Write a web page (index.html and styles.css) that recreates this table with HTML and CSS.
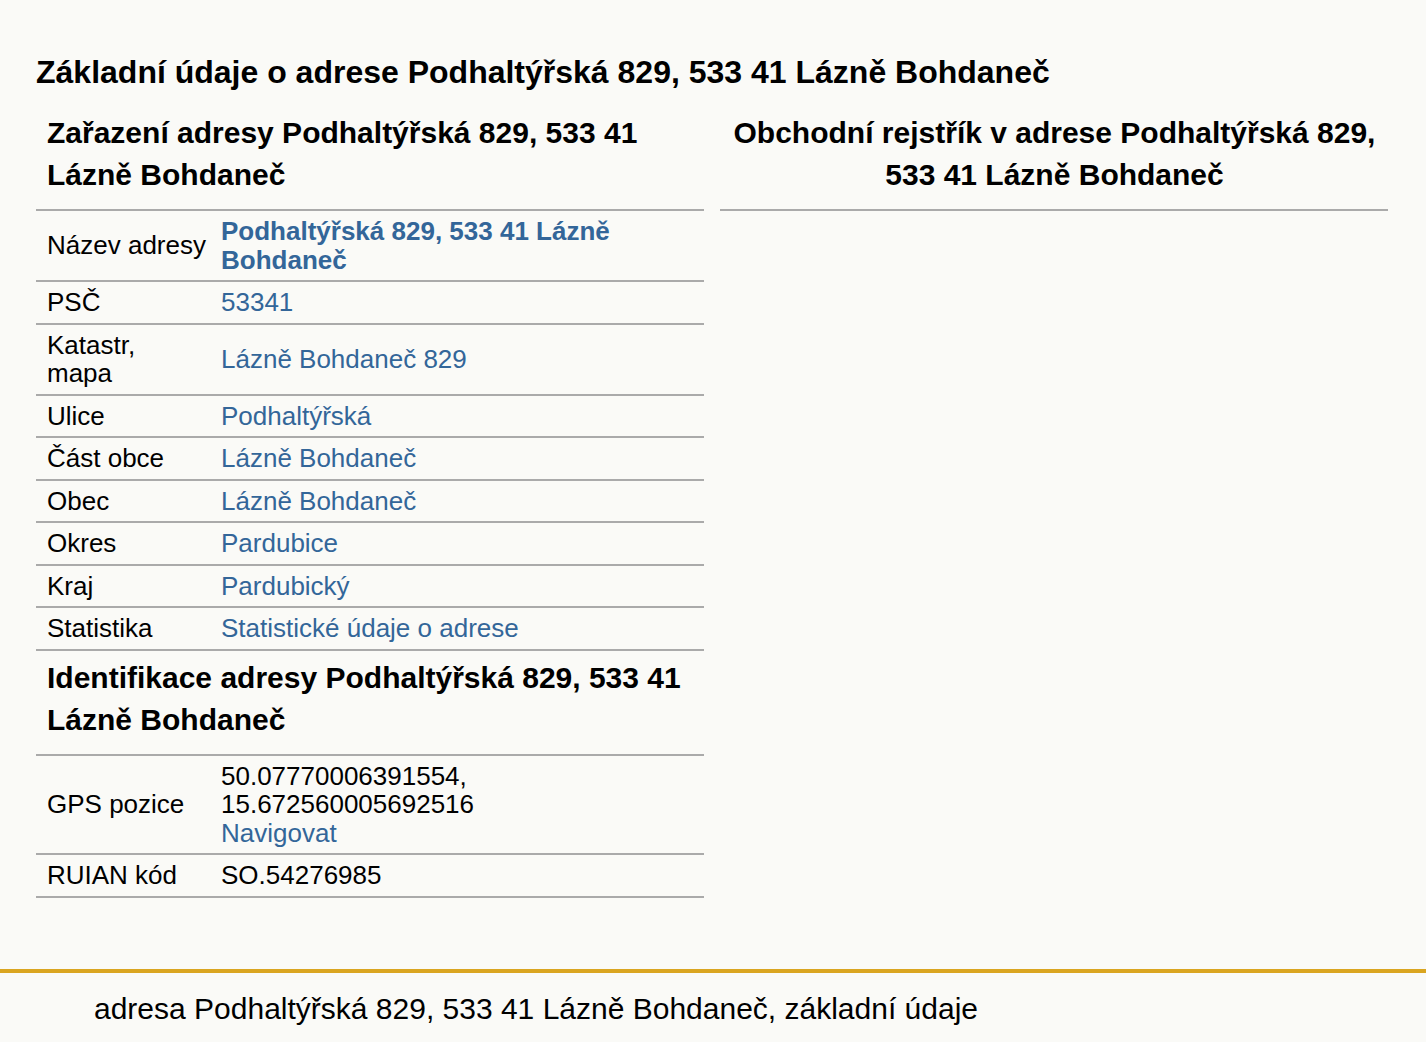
FILE: index.html
```html
<!DOCTYPE html>
<html lang="cs">

<head>
    <meta charset="UTF-8">
    <meta name="viewport" content="width=device-width, initial-scale=1.0">
    <title>Podhaltýřská 829, 533 41 Lázně Bohdaneč</title>
    <link rel="stylesheet" href="styles.css">
</head>

<body>

    <div class="page">

        <h1 class="title">Základní údaje o adrese Podhaltýřská 829, 533 41 Lázně Bohdaneč</h1>

        <div class="columns">

            <div class="col">
                <table class="info">
                    <colgroup>
                        <col class="labelcol">
                        <col>
                    </colgroup>
                    <tr>
                        <th class="sectionhead" colspan="2">Zařazení adresy Podhaltýřská 829, 533 41 Lázně Bohdaneč</th>
                    </tr>
                    <tr>
                        <td class="label">Název adresy</td>
                        <td class="value"><a href="#" class="strong">Podhaltýřská 829, 533 41 Lázně Bohdaneč</a></td>
                    </tr>
                    <tr>
                        <td class="label">PSČ</td>
                        <td class="value"><a href="#">53341</a></td>
                    </tr>
                    <tr>
                        <td class="label">Katastr, mapa</td>
                        <td class="value"><a href="#">Lázně Bohdaneč 829</a></td>
                    </tr>
                    <tr>
                        <td class="label">Ulice</td>
                        <td class="value"><a href="#">Podhaltýřská</a></td>
                    </tr>
                    <tr>
                        <td class="label">Část obce</td>
                        <td class="value"><a href="#">Lázně Bohdaneč</a></td>
                    </tr>
                    <tr>
                        <td class="label">Obec</td>
                        <td class="value"><a href="#">Lázně Bohdaneč</a></td>
                    </tr>
                    <tr>
                        <td class="label">Okres</td>
                        <td class="value"><a href="#">Pardubice</a></td>
                    </tr>
                    <tr>
                        <td class="label">Kraj</td>
                        <td class="value"><a href="#">Pardubický</a></td>
                    </tr>
                    <tr>
                        <td class="label">Statistika</td>
                        <td class="value"><a href="#">Statistické údaje o adrese</a></td>
                    </tr>
                    <tr>
                        <th class="sectionhead" colspan="2">Identifikace adresy Podhaltýřská 829, 533 41 Lázně Bohdaneč</th>
                    </tr>
                    <tr>
                        <td class="label">GPS pozice</td>
                        <td class="value">50.07770006391554,<br>15.672560005692516<br><a href="#">Navigovat</a></td>
                    </tr>
                    <tr>
                        <td class="label">RUIAN kód</td>
                        <td class="value">SO.54276985</td>
                    </tr>
                </table>
            </div>

            <div class="col">
                <h2 class="sectionhead centered">Obchodní rejstřík v adrese Podhaltýřská 829, 533 41 Lázně Bohdaneč</h2>
            </div>

        </div>
    </div>

    <div class="footer">
        adresa Podhaltýřská 829, 533 41 Lázně Bohdaneč, základní údaje
    </div>

</body>

</html>
```

FILE: styles.css
```css
body {
    margin: 0;
    padding: 0;
    background: #fafaf7;
    color: #000;
    font-family: "Liberation Sans", Arial, sans-serif;
}

* {
    box-sizing: border-box;
}

a {
    color: #336699;
    text-decoration: none;
}

.page {
    padding: 0 38px 0 36px;
}

.title {
    margin: 54px 0 0 0;
    font-size: 32px;
    font-weight: 700;
    line-height: 37px;
}

.columns {
    display: grid;
    grid-template-columns: 1fr 1fr;
    gap: 16px;
    margin-top: 15px;
}

.info {
    width: 100%;
    border-collapse: collapse;
    table-layout: fixed;
}

.labelcol {
    width: 175px;
}

.sectionhead {
    margin: 0;
    padding: 6px 10px 13px 11px;
    font-size: 30px;
    font-weight: 700;
    line-height: 42px;
    text-align: left;
    border-bottom: 2px solid #aaa;
}

.centered {
    text-align: center;
}

.info td {
    font-size: 26px;
    line-height: 28.5px;
    padding: 6px 10px;
    vertical-align: middle;
    border-bottom: 2px solid #aaa;
}

.info td.label {
    padding-left: 11px;
    padding-right: 4px;
}

.strong {
    font-weight: 700;
}

.footer {
    margin-top: 71px;
    border-top: 4px solid #daa520;
    padding: 19px 0 40px 94px;
    font-size: 30px;
    line-height: 34px;
}
```
